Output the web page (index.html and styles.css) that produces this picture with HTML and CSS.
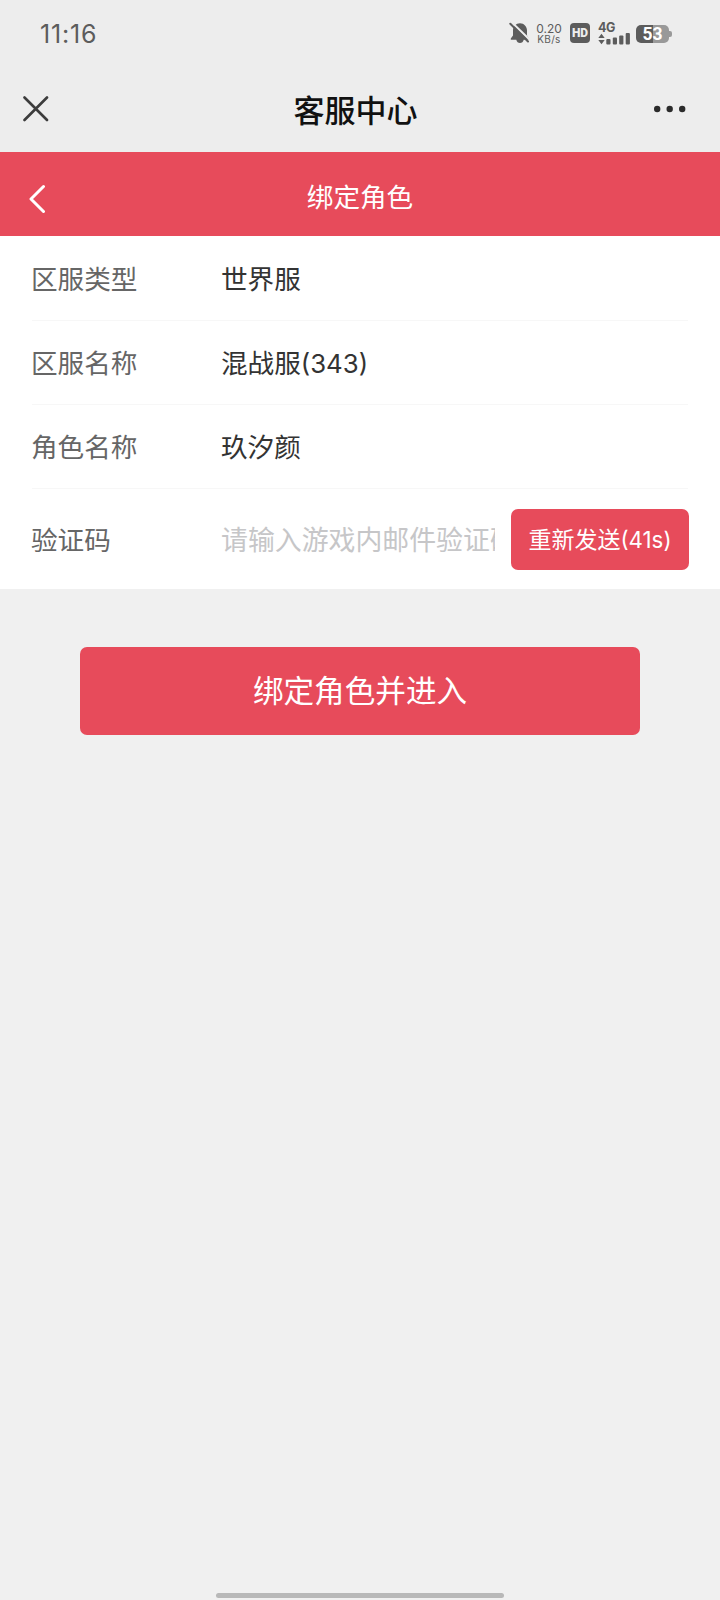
FILE: index.html
```html
<!DOCTYPE html>
<html lang="zh-CN">
<head>
  <meta charset="UTF-8" />
  <meta name="viewport" content="width=device-width, initial-scale=1.0">
  <title>客服中心</title>
  <link rel="stylesheet" href="styles.css">
</head>
<body>
  <div class="status-bar">
    <span class="time">11:16</span>
    <div class="status-icons">
      <svg class="bell" width="22" height="22" viewBox="0 0 22 22">
        <path d="M1.800 17.800V16.500l2.200-3V8.500C4 4.500 7 1.200 11 1.200s7 3.300 7 7.300V13.500l2.200 3v1.300zM7.200 17.500h7.600c-.5 2.500-2 3.500-3.800 3.500s-3.300-1-3.800-3.500z" fill="#5c5c5c"/>
        <path d="M2.500 0 21.500 18.500" stroke="#ededed" stroke-width="2"/>
        <path d="M1.300 1.800 19 19.500" stroke="#5c5c5c" stroke-width="2" stroke-linecap="round"/>
      </svg>
      <div class="speed">
        <span class="speed-num">0.20</span>
        <span class="speed-unit">KB/s</span>
      </div>
      <span class="hd">HD</span>
      <div class="signal">
        <span class="net">4G</span>
        <svg width="32" height="12" viewBox="0 0 32 12" fill="#5c5c5c">
          <path d="M.3 5 3.500.8 6.700 5zM.3 7h6.400l-3.200 4.200z"/>
          <rect x="8.300" y="6" width="4.200" height="5.500" rx="1"/>
          <rect x="14.800" y="4.500" width="4.200" height="7" rx="1"/>
          <rect x="21.200" y="2.500" width="4.200" height="9" rx="1"/>
          <rect x="27.700" y="0" width="4.200" height="11.500" rx="1"/>
        </svg>
      </div>
      <div class="battery"><span class="battery-level">53</span><i class="battery-tip"></i></div>
    </div>
  </div>

  <div class="nav-bar">
    <svg class="close" width="26" height="26" viewBox="0 0 26 26">
      <path d="M1.500 1.500l22.500 22.500M24 1.500l-22.500 22.500" stroke="#3c3c3c" stroke-width="2.600" stroke-linecap="round"/>
    </svg>
    <h1>客服中心</h1>
    <svg class="more" width="32" height="8" viewBox="0 0 32 8" fill="#2b2b2b">
      <circle cx="3.200" cy="4" r="3.200"/><circle cx="15.700" cy="4" r="3.200"/><circle cx="28.200" cy="4" r="3.200"/>
    </svg>
  </div>

  <div class="page-header">
    <svg class="back" width="17" height="30" viewBox="0 0 17 30">
      <path d="M14.500 2.500 2 15l12.500 12.500" fill="none" stroke="#fff" stroke-width="3" stroke-linecap="round" stroke-linejoin="round"/>
    </svg>
    <h2>绑定角色</h2>
  </div>

  <div class="form">
    <div class="row">
      <span class="label">区服类型</span>
      <span class="value">世界服</span>
    </div>
    <div class="row">
      <span class="label">区服名称</span>
      <span class="value">混战服<span class="num">(343)</span></span>
    </div>
    <div class="row">
      <span class="label">角色名称</span>
      <span class="value">玖汐颜</span>
    </div>
    <div class="row code-row">
      <span class="label">验证码</span>
      <input class="code-input" type="text" placeholder="请输入游戏内邮件验证码">
      <button class="resend">重新发送<span class="num">(41s)</span></button>
    </div>
  </div>

  <button class="submit">绑定角色并进入</button>

  <div class="home-bar"></div>
</body>
</html>
```
FILE: styles.css
```css
* { box-sizing: border-box; }
body {
  margin: 0;
  height: 1600px;
  display: flex;
  flex-direction: column;
  background-color: #f0f0f0;
  font-family: "Noto Sans CJK SC", sans-serif;
  overflow: hidden;
}
svg { display: block; }
button {
  padding: 0;
  border: none;
  background-color: #e74b5b;
  color: #fff;
  font-family: inherit;
}
.num {
  font-family: Inter, sans-serif;
  font-size: 0.97em;
}

.status-bar {
  height: 68px;
  padding: 0 48px 0 40px;
  display: flex;
  align-items: center;
  justify-content: space-between;
  background-color: #ededed;
  color: #5c5c5c;
  font-family: Inter, sans-serif;
}
.time {
  font-size: 25px;
  letter-spacing: 0.8px;
}
.status-icons {
  display: flex;
  align-items: center;
  height: 24px;
  margin-bottom: 2px;
}
.speed {
  display: flex;
  flex-direction: column;
  align-items: center;
  width: 26px;
  margin-left: 5px;
  margin-right: 1px;
}
.speed-num { font-size: 12px; line-height: 11px; }
.speed-unit { font-size: 10px; line-height: 10px; letter-spacing: 0.3px; }
.hd {
  width: 20px;
  height: 20px;
  margin-left: 7px;
  border-radius: 4px;
  background-color: #5c5c5c;
  color: #ededed;
  font-family: Roboto, sans-serif;
  font-size: 12px;
  font-weight: 900;
  line-height: 20px;
  text-align: center;
}
.signal { width: 32px; margin-left: 8px; }
.net {
  display: block;
  margin-top: 1px;
  font-size: 12.5px;
  font-weight: 700;
  line-height: 10px;
  letter-spacing: -0.5px;
}
.battery { display: flex; align-items: center; margin-left: 6px; margin-top: 2px; }
.battery-level {
  width: 33px;
  height: 18px;
  border-radius: 5px;
  background: linear-gradient(to right, #5c5c5c 53%, #999 53%);
  color: #fff;
  font-family: Roboto, sans-serif;
  font-size: 17.5px;
  font-weight: 700;
  line-height: 19px;
  text-align: center;
}
.battery-tip {
  width: 3px;
  height: 6px;
  border-radius: 0 2px 2px 0;
  background-color: #999;
}

.nav-bar {
  height: 84px;
  padding: 0 34px 0 23px;
  display: grid;
  grid-template-columns: 32px 1fr 32px;
  align-items: center;
  background-color: #ededed;
}
.nav-bar svg { margin-bottom: 3px; }
.nav-bar h1 {
  margin: 0 -1px 2px 1px;
  font-size: 31px;
  font-weight: 500;
  line-height: 82px;
  text-align: center;
  color: #111;
}

.page-header {
  height: 84px;
  padding: 0 29px;
  display: grid;
  grid-template-columns: 17px 1fr 17px;
  align-items: center;
  background-color: #e74b5b;
  color: #fff;
}
.page-header .back { margin-top: 9px; }
.page-header h2 {
  margin: 0;
  padding-top: 4px;
  font-size: 26.6px;
  font-weight: 400;
  line-height: 80px;
  text-align: center;
}

.form {
  padding: 0 32px;
  background-color: #fff;
}
.row {
  height: 84px;
  padding-bottom: 2px;
  display: flex;
  align-items: center;
  border-bottom: 1px solid #f7f7f7;
  font-size: 26.6px;
}
.row:first-child { height: 85px; }
.label { width: 190px; margin-left: -1px; color: #666; }
.value { color: #333; }
.code-row {
  height: 100px;
  margin-right: -1px;
  padding: 1px 0 0;
  border-bottom: none;
}
.code-row .label { padding-bottom: 2px; }
.code-input {
  width: 274px;
  height: 60px;
  padding: 0 0 2px;
  border: none;
  outline: none;
  background: transparent;
  font-family: inherit;
  font-size: 26.9px;
}
.code-input::placeholder { color: #c6c6c8; }
.resend {
  width: 178px;
  height: 61px;
  margin-left: 16px;
  padding-bottom: 3px;
  flex-shrink: 0;
  border-radius: 7px;
  font-size: 23px;
}

.submit {
  width: 560px;
  height: 88px;
  margin: 58px auto 0;
  padding-bottom: 4px;
  border-radius: 7px;
  font-size: 30.6px;
}
.home-bar {
  width: 288px;
  height: 5px;
  margin: auto auto 2px;
  border-radius: 3px;
  background-color: #b8b8b8;
}
```
